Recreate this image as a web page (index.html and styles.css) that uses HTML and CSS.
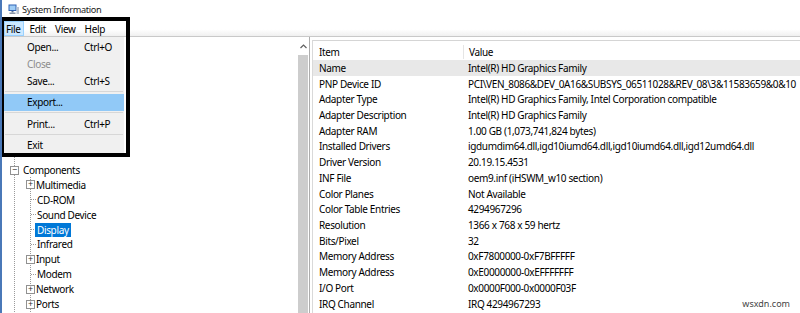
FILE: index.html
```html
<!DOCTYPE html>
<html lang="en">
<head>
    <meta charset="UTF-8">
    <title>System Information</title>
    <link rel="stylesheet" href="styles.css">
</head>
<body>
<div class="window">

    <div class="titlebar">
        <svg class="app-icon" width="11" height="11" viewBox="0 0 11 11">
            <rect x="0.5" y="0.5" width="8" height="6.5" fill="#2f62b5"/>
            <rect x="1.5" y="1.5" width="6" height="4.5" fill="#9fcdf6"/>
            <rect x="3.5" y="7" width="2" height="1.5" fill="#5a6f8e"/>
            <rect x="1.5" y="8.5" width="6" height="1.5" fill="#8a96a8"/>
            <rect x="8.5" y="3" width="2.5" height="7" fill="#b9c3d1"/>
        </svg>
        <span class="title">System Information</span>
    </div>

    <div class="menubar">
        <span class="menu-item active">File</span>
        <span class="menu-item">Edit</span>
        <span class="menu-item">View</span>
        <span class="menu-item">Help</span>
    </div>

    <div class="main">
        <div class="left-pane">
            <div class="tree-wrap">
                <!-- upper rows of the tree are hidden behind the open menu -->
                <ul class="tree">
                    <li>
                        <div class="node"><span class="box">&minus;</span><span class="label">Components</span></div>
                        <ul class="children">
                            <li><div class="node"><span class="box">+</span><span class="label">Multimedia</span></div></li>
                            <li><div class="node"><span class="dash"></span><span class="label">CD-ROM</span></div></li>
                            <li><div class="node"><span class="dash"></span><span class="label">Sound Device</span></div></li>
                            <li><div class="node"><span class="dash"></span><span class="label selected">Display</span></div></li>
                            <li><div class="node"><span class="dash"></span><span class="label">Infrared</span></div></li>
                            <li><div class="node"><span class="box">+</span><span class="label">Input</span></div></li>
                            <li><div class="node"><span class="dash"></span><span class="label">Modem</span></div></li>
                            <li><div class="node"><span class="box">+</span><span class="label">Network</span></div></li>
                            <li><div class="node"><span class="box">+</span><span class="label">Ports</span></div></li>
                        </ul>
                    </li>
                </ul>
            </div>
            <div class="scrollbar">
                <div class="arrow">
                    <svg width="7" height="5" viewBox="0 0 7 5"><path d="M0.5 4 L3.5 1 L6.5 4" fill="none" stroke="#606060" stroke-width="1.2"/></svg>
                </div>
                <div class="thumb"></div>
            </div>
        </div>

        <div class="right-pane">
            <div class="row head"><span class="cell-item">Item</span><span class="cell-value">Value</span></div>
            <div class="row current"><span class="cell-item">Name</span><span class="cell-value">Intel(R) HD Graphics Family</span></div>
            <div class="row"><span class="cell-item">PNP Device ID</span><span class="cell-value">PCI\VEN_8086&amp;DEV_0A16&amp;SUBSYS_06511028&amp;REV_08\3&amp;11583659&amp;0&amp;10</span></div>
            <div class="row"><span class="cell-item">Adapter Type</span><span class="cell-value">Intel(R) HD Graphics Family, Intel Corporation compatible</span></div>
            <div class="row"><span class="cell-item">Adapter Description</span><span class="cell-value">Intel(R) HD Graphics Family</span></div>
            <div class="row"><span class="cell-item">Adapter RAM</span><span class="cell-value">1.00 GB (1,073,741,824 bytes)</span></div>
            <div class="row"><span class="cell-item">Installed Drivers</span><span class="cell-value">igdumdim64.dll,igd10iumd64.dll,igd10iumd64.dll,igd12umd64.dll</span></div>
            <div class="row"><span class="cell-item">Driver Version</span><span class="cell-value">20.19.15.4531</span></div>
            <div class="row"><span class="cell-item">INF File</span><span class="cell-value">oem9.inf (iHSWM_w10 section)</span></div>
            <div class="row"><span class="cell-item">Color Planes</span><span class="cell-value">Not Available</span></div>
            <div class="row"><span class="cell-item">Color Table Entries</span><span class="cell-value">4294967296</span></div>
            <div class="row"><span class="cell-item">Resolution</span><span class="cell-value">1366 x 768 x 59 hertz</span></div>
            <div class="row"><span class="cell-item">Bits/Pixel</span><span class="cell-value">32</span></div>
            <div class="row"><span class="cell-item">Memory Address</span><span class="cell-value">0xF7800000-0xF7BFFFFF</span></div>
            <div class="row"><span class="cell-item">Memory Address</span><span class="cell-value">0xE0000000-0xEFFFFFFF</span></div>
            <div class="row"><span class="cell-item">I/O Port</span><span class="cell-value">0x0000F000-0x0000F03F</span></div>
            <div class="row"><span class="cell-item">IRQ Channel</span><span class="cell-value">IRQ 4294967293</span></div>
        </div>
    </div>

    <!-- File menu, open -->
    <div class="dropdown">
        <div class="dd-item"><span class="dd-label">Open...</span><span>Ctrl+O</span></div>
        <div class="dd-item disabled"><span class="dd-label">Close</span></div>
        <div class="dd-item"><span class="dd-label">Save...</span><span>Ctrl+S</span></div>
        <div class="dd-sep"></div>
        <div class="dd-item hover"><span class="dd-label">Export...</span></div>
        <div class="dd-sep"></div>
        <div class="dd-item"><span class="dd-label">Print...</span><span>Ctrl+P</span></div>
        <div class="dd-sep"></div>
        <div class="dd-item"><span class="dd-label">Exit</span></div>
    </div>

    <div class="callout"></div>
    <div class="watermark">wsxdn.com</div>
</div>
</body>
</html>
```

FILE: styles.css
```css
body {
    margin: 0;
    padding: 0;
    font-family: "Noto Sans", "Open Sans", sans-serif;
    font-size: 10px;
    letter-spacing: -0.35px;
    color: #000;
    background-color: #fff;
}

.window {
    position: relative;
    width: 798px;
    height: 313px;
    overflow: hidden;
    border-left: 2px solid #4a78b8;
}

/* Title bar */
.titlebar {
    display: flex;
    align-items: center;
    height: 17px;
    padding-left: 6px;
    padding-top: 2px;
    box-sizing: border-box;
}

.app-icon {
    display: block;
}

.title {
    margin-left: 3px;
    font-size: 9.2px;
    color: #222;
}

/* Menu bar */
.menubar {
    display: flex;
    align-items: flex-end;
    gap: 4px;
    height: 20px;
    padding-left: 2px;
    box-sizing: border-box;
    background: linear-gradient(#fff 65%, #f0f0f0);
    border-bottom: 1px solid #c9c9c9;
}

.menu-item {
    height: 15px;
    line-height: 14px;
    padding: 0 2px 0 1px;
    box-sizing: border-box;
    border: 1px solid transparent;
}

.menu-item.active {
    background-color: #cce8ff;
    border-color: #99d1ff;
}

/* Main panes */
.main {
    display: flex;
    height: 276px;
}

.left-pane {
    display: flex;
    width: 307px;
    flex-shrink: 0;
    border-right: 1px solid #adadad;
}

.tree-wrap {
    flex: 1;
}

.tree,
.children {
    list-style: none;
    margin: 0;
    padding: 0;
}

.tree {
    margin-left: 12px;
    padding-top: 125.6px;
    border-left: 1px dotted #9a9a9a;
}

.children {
    margin-left: 15px;
    border-left: 1px dotted #9a9a9a;
}

.node {
    display: flex;
    align-items: center;
    height: 14.9px;
    white-space: nowrap;
}

.box {
    width: 9px;
    height: 9px;
    margin-left: -5px;
    box-sizing: border-box;
    border: 1px solid #919191;
    background-color: #fff;
    font-size: 9px;
    line-height: 6px;
    text-align: center;
    letter-spacing: 0;
    color: #333;
}

.tree > li > .node .box + .label {
    margin-left: 3px;
}

.children .box + .label {
    margin-left: 0;
}

.dash {
    width: 5px;
    border-top: 1px dotted #9a9a9a;
}

.label {
    padding: 0 1px;
    line-height: 14px;
}

.label.selected {
    background-color: #0078d7;
    color: #fff;
    padding: 0 2px;
    margin-left: -1px;
}

.scrollbar {
    display: flex;
    flex-direction: column;
    width: 12px;
}

.arrow {
    display: flex;
    justify-content: center;
    align-items: center;
    height: 18px;
}

.thumb {
    flex: 1;
    margin: 0 1px;
    background-color: #cdcdcd;
}

.right-pane {
    flex: 1;
    margin-left: 2px;
    margin-top: 3px;
    border-left: 1px solid #d9d9d9;
    border-top: 1px solid #d5d5d5;
}

.row {
    display: flex;
    align-items: center;
    height: 15.73px;
    white-space: nowrap;
}

.row.head {
    height: 19px;
    padding-top: 3px;
    box-sizing: border-box;
}

.row.head .cell-item {
    border-right: 1px solid #e5e5e5;
}

.row.current {
    background-color: #e8e8e8;
}

.cell-item {
    width: 144px;
    padding-left: 6px;
    flex-shrink: 0;
}

.cell-value {
    padding-left: 5px;
}

/* Dropdown menu */
.dropdown {
    position: absolute;
    left: 2px;
    top: 37px;
    width: 120px;
    padding-top: 1px;
    background-color: #f0f0f0;
}

.dd-item {
    display: flex;
    align-items: center;
    height: 17px;
    padding-left: 23px;
}

.dd-label {
    width: 57px;
}

.dd-item.disabled {
    color: #8d8d8d;
}

.dd-item.hover {
    background-color: #91c9f7;
}

.dd-sep {
    height: 4.5px;
    display: flex;
    align-items: center;
}

.dd-sep::before {
    content: "";
    flex: 1;
    margin: 0 1px;
    border-top: 1px solid #d7d7d7;
}

.callout {
    position: absolute;
    left: -2px;
    top: 17px;
    width: 130px;
    height: 140px;
    box-sizing: border-box;
    border: 4px solid #000;
    pointer-events: none;
}

.watermark {
    position: absolute;
    right: 10px;
    bottom: 3px;
    font-size: 9px;
    letter-spacing: 0;
    color: #444;
}
```
